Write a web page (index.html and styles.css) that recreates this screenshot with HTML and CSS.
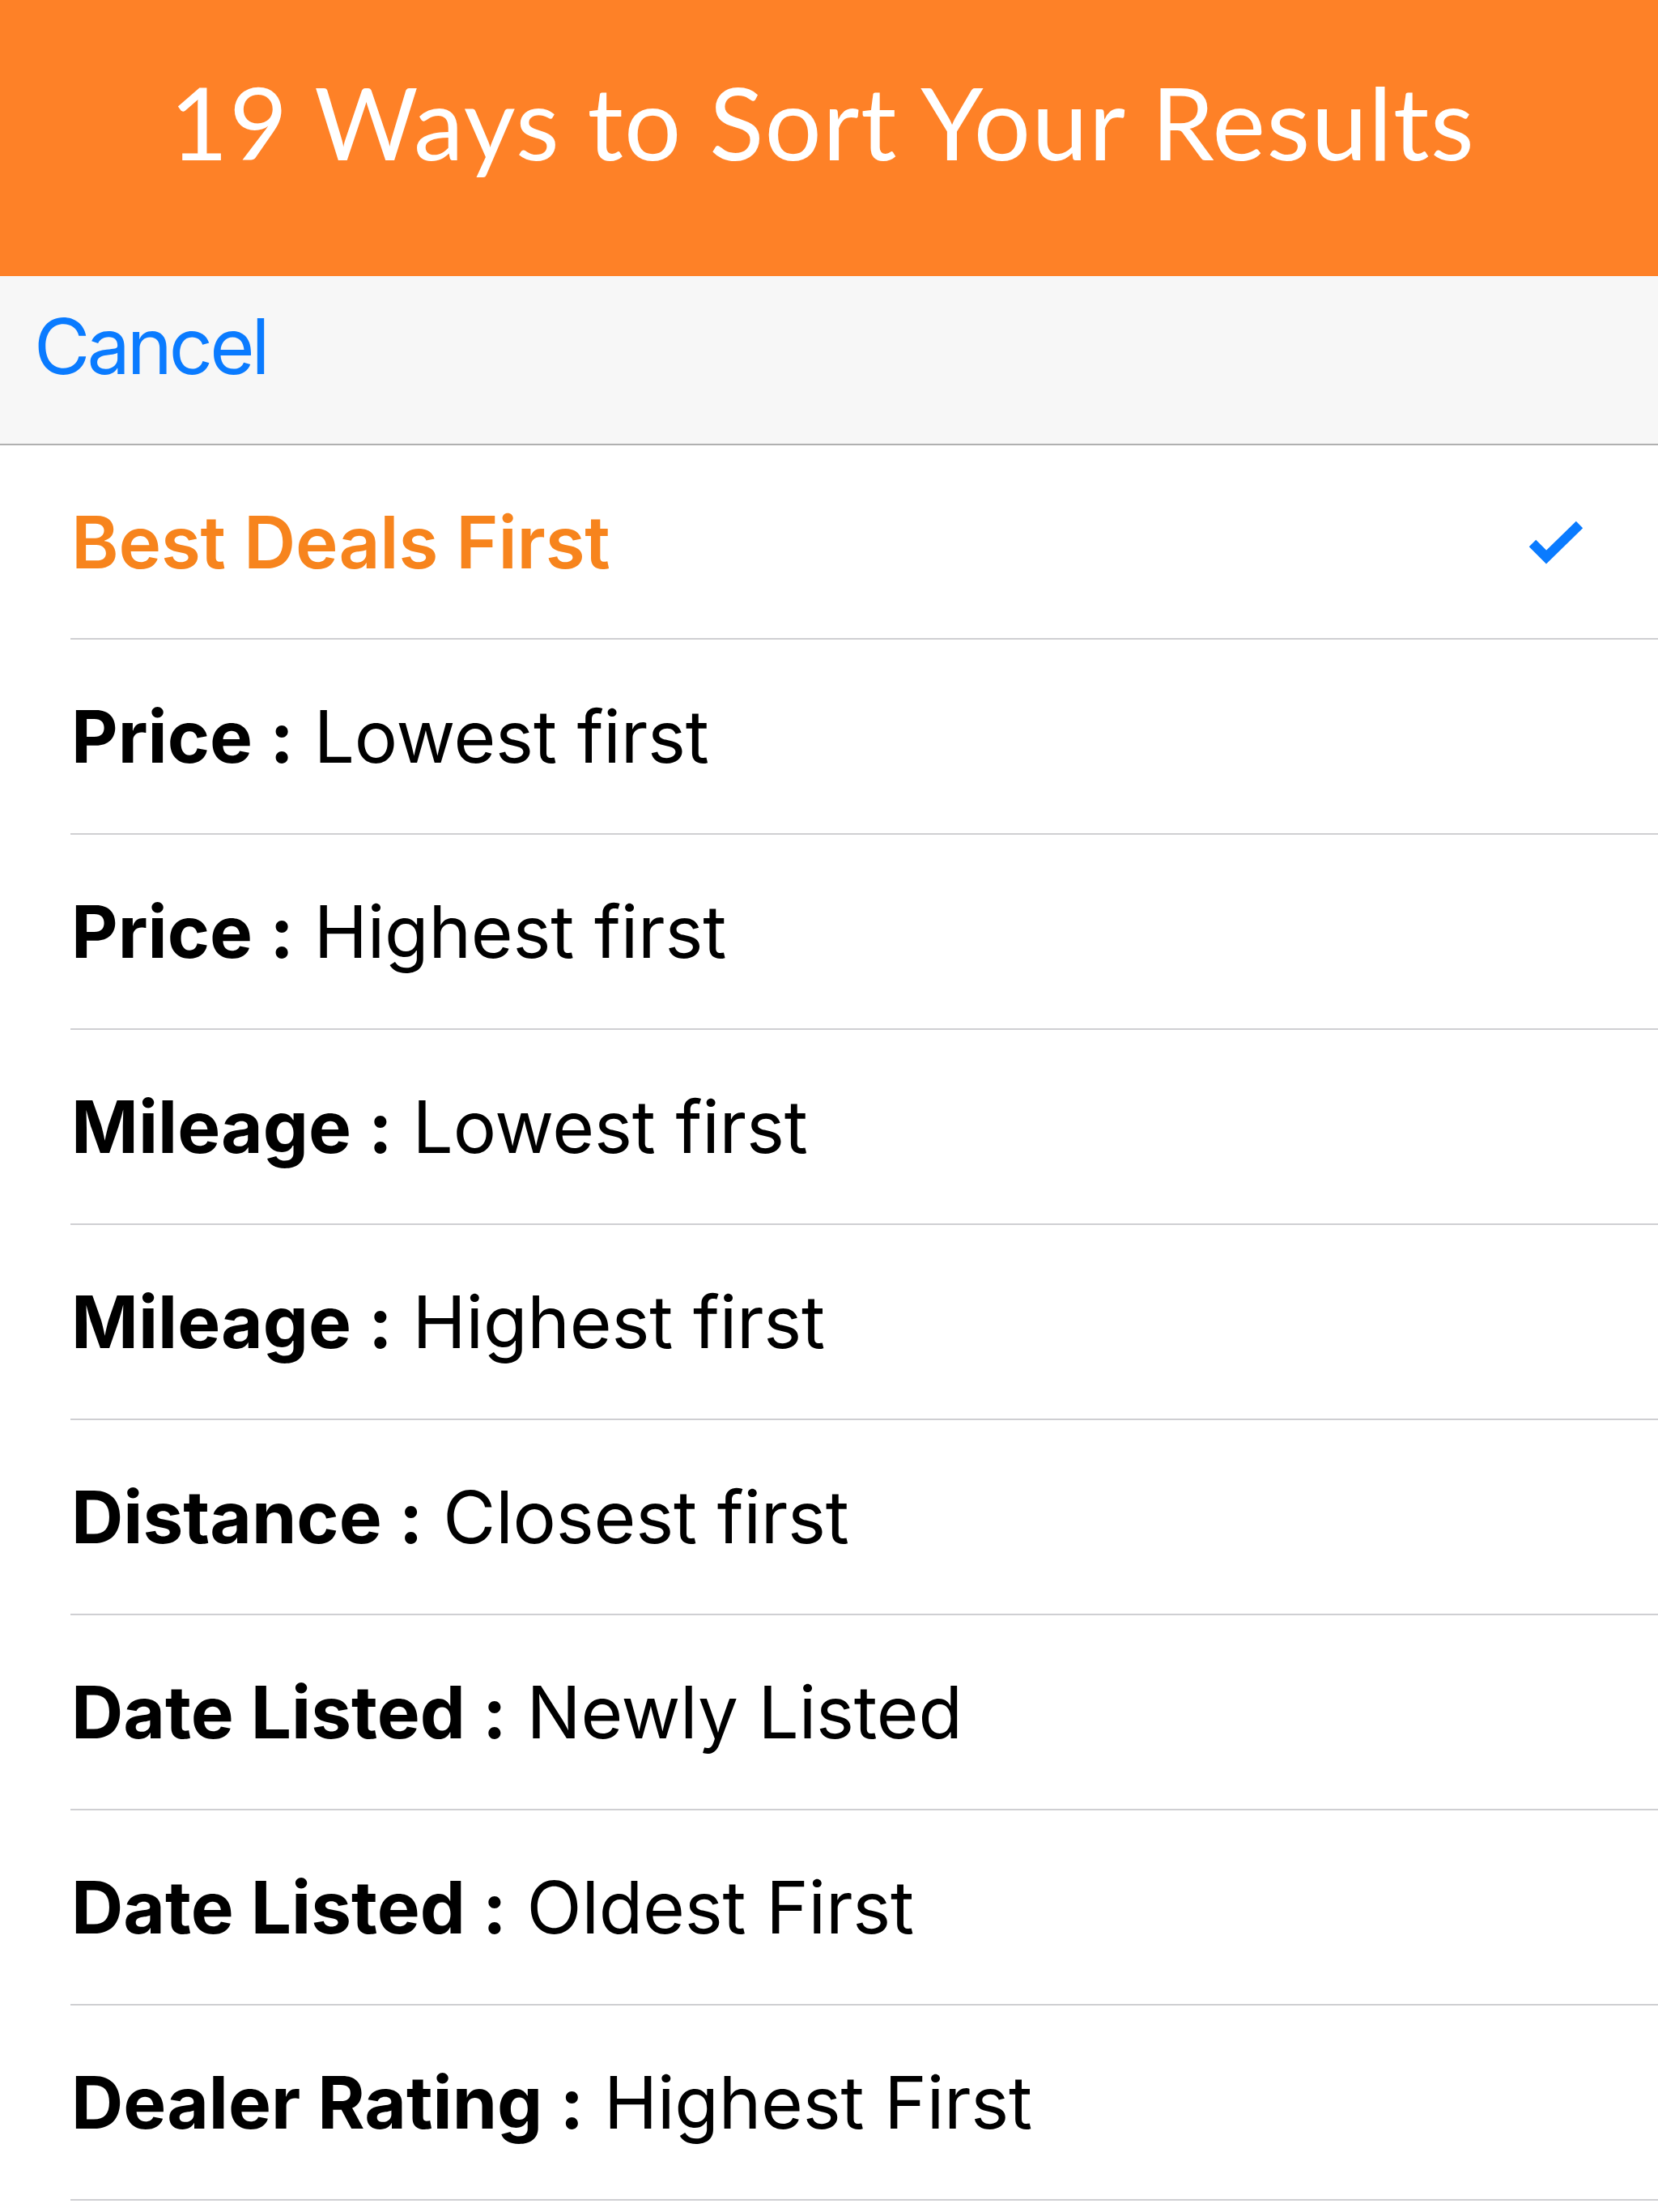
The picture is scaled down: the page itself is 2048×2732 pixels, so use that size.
FILE: index.html
```html
<!DOCTYPE html>
<html>
<head>
<meta charset="utf-8">
<link rel="stylesheet" href="styles.css">
</head>
<body>
<header class="banner">
  <h1 class="banner-title">19 Ways to Sort Your Results</h1>
</header>
<div class="toolbar">
  <span class="cancel">Cancel</span>
</div>
<ul class="sort-list">
  <li class="sort-row selected">
    <span class="sort-label">Best Deals First</span>
    <svg class="check" width="72" height="58" viewBox="0 0 72 58"><polyline points="7,31 24,48 65,8" fill="none" stroke="#0a7bff" stroke-width="12" stroke-linecap="butt" stroke-linejoin="miter"/></svg>
  </li>
  <li class="sort-row"><span class="sort-label"><b>Price :</b> Lowest first</span></li>
  <li class="sort-row"><span class="sort-label"><b>Price :</b> Highest first</span></li>
  <li class="sort-row"><span class="sort-label"><b>Mileage :</b> Lowest first</span></li>
  <li class="sort-row"><span class="sort-label"><b>Mileage :</b> Highest first</span></li>
  <li class="sort-row"><span class="sort-label"><b>Distance :</b> Closest first</span></li>
  <li class="sort-row"><span class="sort-label"><b>Date Listed :</b> Newly Listed</span></li>
  <li class="sort-row"><span class="sort-label"><b>Date Listed :</b> Oldest First</span></li>
  <li class="sort-row"><span class="sort-label"><b>Dealer Rating :</b> Highest First</span></li>
</ul>
</body>
</html>
```
FILE: styles.css
```css
html, body {
  margin: 0;
  padding: 0;
  background: #ffffff;
}
body {
  width: 2048px;
  font-family: "Inter", "Liberation Sans", sans-serif;
}
.banner {
  height: 341px;
  background: #fe8127;
  box-sizing: border-box;
  padding-top: 88px;
  padding-right: 16px;
}
.banner-title {
  margin: 0;
  font-family: "Lato", "Open Sans", sans-serif;
  font-weight: 400;
  font-size: 124px;
  letter-spacing: 1.5px;
  line-height: 1;
  color: #ffffff;
  text-align: center;
}
.toolbar {
  box-sizing: border-box;
  height: 209px;
  background: #f7f7f7;
  border-bottom: 2px solid #b0b0b0;
  padding-left: 42px;
  padding-top: 39px;
}
.cancel {
  display: block;
  font-size: 95px;
  letter-spacing: -4px;
  line-height: 1;
  color: #0a7bff;
}
.sort-list {
  list-style: none;
  margin: 0;
  padding: 0;
}
.sort-row {
  display: flex;
  align-items: center;
  justify-content: space-between;
  height: 239px;
  margin-left: 87px;
  padding-left: 1px;
  padding-right: 90px;
  border-bottom: 2px solid #cfcfd2;
  font-size: 89px;
  letter-spacing: -0.2px;
  line-height: 1;
  color: #000000;
}
.sort-row:first-child {
  height: 238px;
}
.sort-row b {
  font-weight: 700;
  letter-spacing: 0;
}
.selected .sort-label {
  color: #f7841d;
  font-weight: 600;
}
.check {
  display: block;
}
```
